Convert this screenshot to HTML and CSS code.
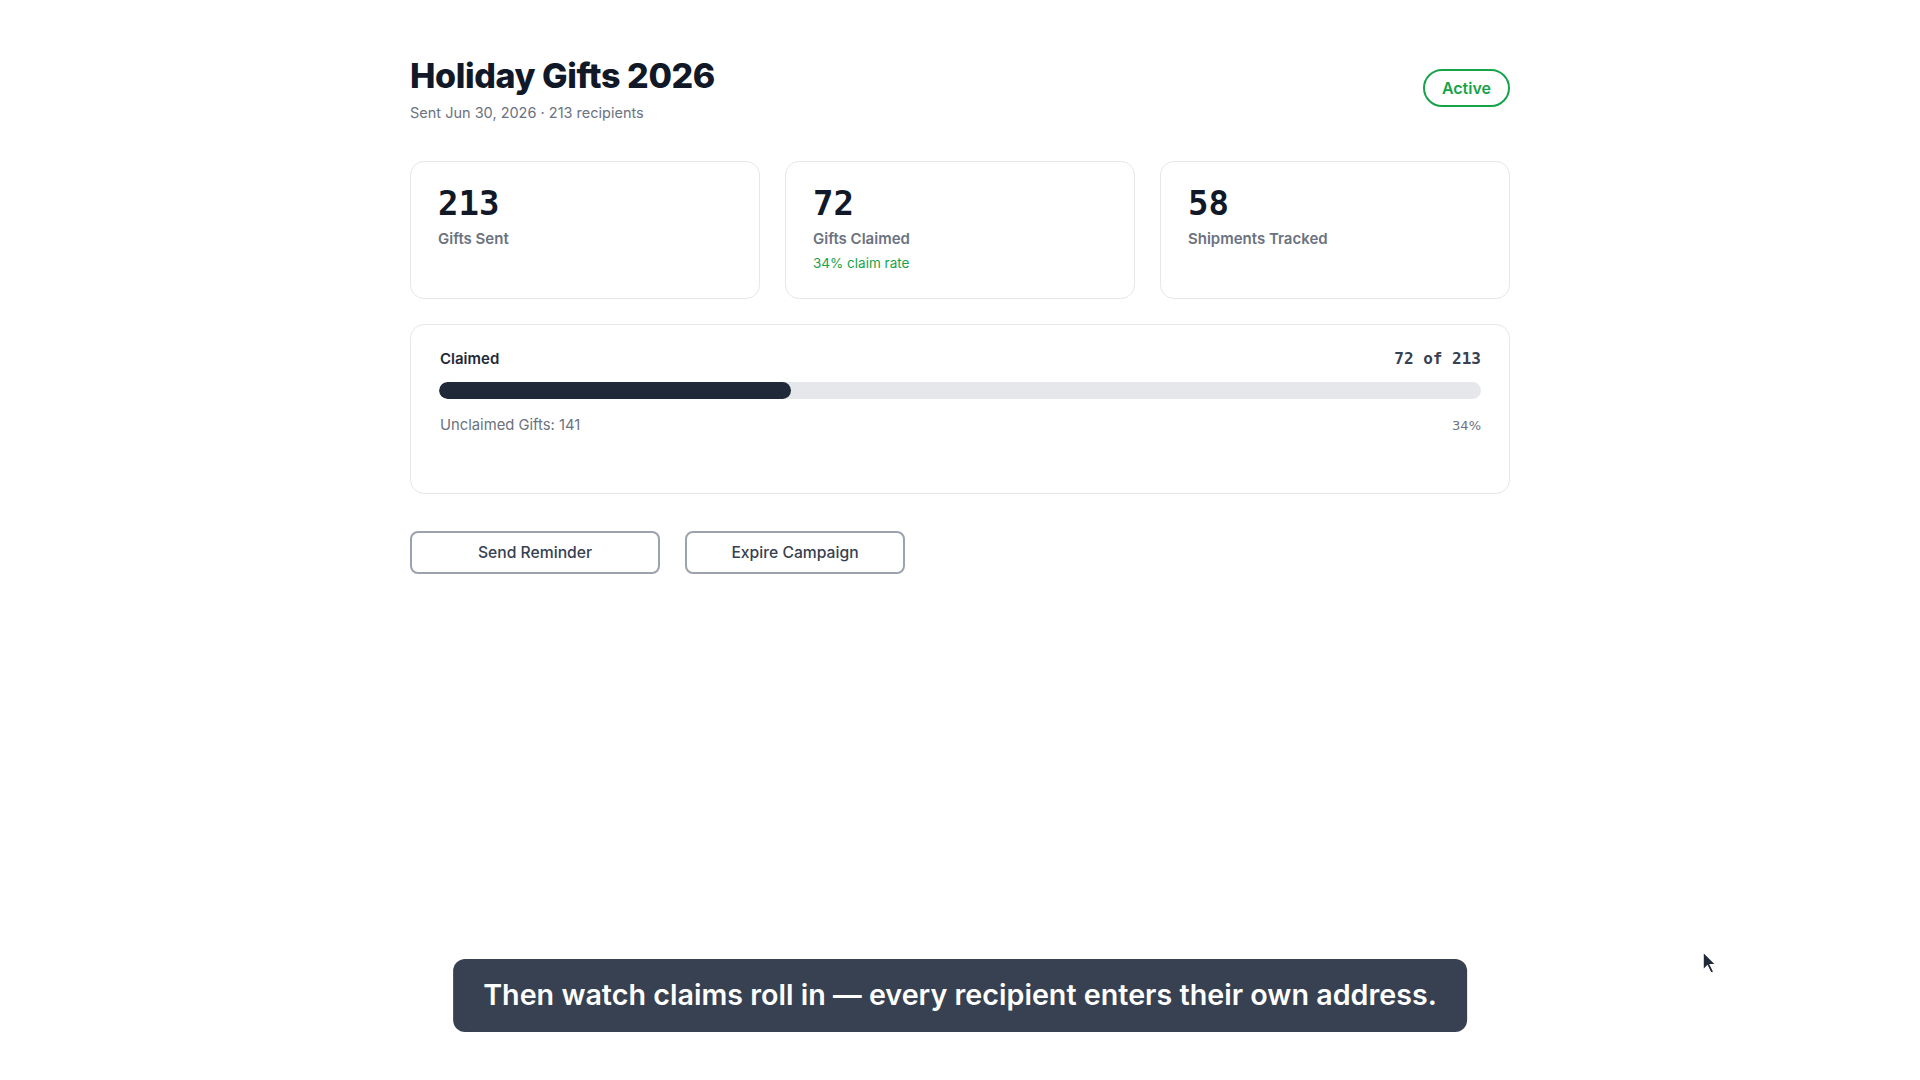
FILE: index.html
```html
<!DOCTYPE html>
<html lang="en">
<head>
  <meta charset="UTF-8" />
  <meta name="viewport" content="width=device-width, initial-scale=1.0"/>
  <title>Holiday Gifts 2026</title>
  <link rel="stylesheet" href="styles.css">
</head>
<body>
  <div class="container">
    <div class="header">
      <div>
        <h1>Holiday Gifts 2026</h1>
        <p class="subtitle">Sent Jun 30, 2026 · 213 recipients</p>
      </div>
      <span class="badge">Active</span>
    </div>

    <div class="stats">
      <div class="card">
        <div class="stat-num">213</div>
        <div class="stat-label">Gifts Sent</div>
      </div>
      <div class="card">
        <div class="stat-num">72</div>
        <div class="stat-label">Gifts Claimed</div>
        <div class="stat-note">34% claim rate</div>
      </div>
      <div class="card">
        <div class="stat-num">58</div>
        <div class="stat-label">Shipments Tracked</div>
      </div>
    </div>

    <div class="card progress-card">
      <div class="progress-head">
        <span class="progress-title">Claimed</span>
        <span class="progress-count">72 of 213</span>
      </div>
      <div class="track"><div class="fill" style="width: 33.8%"></div></div>
      <div class="progress-foot">
        <span>Unclaimed Gifts: 141</span>
        <span class="pct">34%</span>
      </div>
    </div>

    <div class="actions">
      <button class="btn btn-reminder">Send Reminder</button>
      <button class="btn btn-expire">Expire Campaign</button>
    </div>
  </div>

  <div class="caption">Then watch claims roll in — every recipient enters their own address.</div>

  <!-- mouse pointer -->
  <svg class="pointer" width="17" height="25" viewBox="0 0 16 24">
    <path d="M1 1 L1 18 L5 14 L8.5 21 L11 20 L7.5 13 L13 13 Z" fill="#1f2937" stroke="#ffffff" stroke-width="1"/>
  </svg>
</body>
</html>
```

FILE: styles.css
```css
body {
  font-family: Inter, "Noto Sans", sans-serif;
  margin: 0;
  padding: 0;
  background: #ffffff;
  color: #111827;
}
.container {
  max-width: 1100px;
  margin: 0 auto;
  padding-top: 55px;
}
.header {
  display: flex;
  justify-content: space-between;
  align-items: center;
  margin-bottom: 38px;
}
h1 {
  margin: 0;
  font-size: 34px;
  line-height: 42px;
  font-weight: 800;
  letter-spacing: -0.4px;
  color: #111827;
}
.subtitle {
  margin: 6px 0 0;
  font-size: 14.5px;
  line-height: 20px;
  color: #6b7280;
}
.badge {
  display: inline-block;
  margin-bottom: 2px;
  border: 2px solid #16a34a;
  border-radius: 999px;
  padding: 7px 17px;
  font-size: 16px;
  line-height: 20px;
  font-weight: 600;
  color: #16a34a;
}
.stats {
  display: grid;
  grid-template-columns: repeat(3, 1fr);
  gap: 25px;
}
.card {
  border: 1px solid #e5e7eb;
  border-radius: 14px;
  padding: 21px 27px 26px;
  background: #fff;
}
.stat-num {
  font-family: "DejaVu Sans Mono", monospace;
  font-size: 34px;
  line-height: 40px;
  font-weight: 700;
  color: #111827;
}
.stat-label {
  margin-top: 6px;
  font-size: 15px;
  line-height: 20px;
  font-weight: 600;
  color: #6b7280;
}
.stat-note {
  margin-top: 5px;
  font-size: 13.5px;
  line-height: 18px;
  color: #16a34a;
}
.progress-card {
  margin-top: 25px;
  padding: 24px 28px 57px;
}
.progress-head, .progress-foot {
  display: flex;
  justify-content: space-between;
  align-items: baseline;
}
.progress-title {
  font-size: 15px;
  line-height: 20px;
  font-weight: 600;
  color: #1f2937;
  padding-left: 1px;
}
.progress-count {
  font-family: "DejaVu Sans Mono", monospace;
  font-size: 16px;
  font-weight: 700;
  color: #374151;
}
.track {
  height: 17px;
  margin-top: 13px;
  background: #e5e7eb;
  border-radius: 9px;
  overflow: hidden;
}
.fill {
  height: 100%;
  background: #1f2937;
  border-radius: 9px;
}
.progress-foot {
  margin-top: 16px;
  font-size: 14.8px;
  line-height: 20px;
  color: #6b7280;
}
.progress-foot span:first-child {
  padding-left: 1px;
}
.pct {
  font-family: "DejaVu Sans", sans-serif;
  font-size: 13px;
}
.actions {
  display: flex;
  gap: 25px;
  margin-top: 37px;
}
.btn {
  height: 43px;
  border: 2px solid #9ca3af;
  border-radius: 8px;
  background: #fff;
  font-family: Inter, sans-serif;
  font-size: 15.7px;
  font-weight: 500;
  color: #374151;
  cursor: pointer;
}
.btn-reminder { width: 250px; }
.btn-expire { width: 220px; }
.caption {
  position: fixed;
  left: 50%;
  bottom: 48px;
  transform: translateX(-50%);
  background: #374151;
  color: #fff;
  font-size: 28.7px;
  line-height: 36px;
  font-weight: 600;
  padding: 18px 30px 19px;
  border-radius: 12px;
  white-space: nowrap;
}
.pointer {
  position: fixed;
  left: 1702px;
  top: 951px;
}
```
